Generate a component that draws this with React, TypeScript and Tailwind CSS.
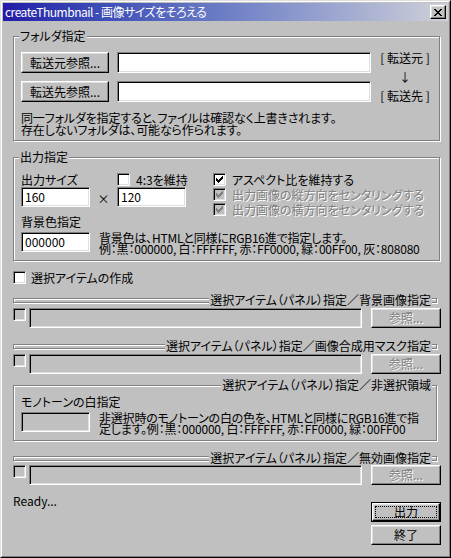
import React from 'react';

const FONT = "font-['Noto_Sans_CJK_JP',sans-serif] [font-feature-settings:'palt']";

type BoxProps = { children?: React.ReactNode; className?: string };

// raised 3D bevel used by buttons
function Raised({ children, className = '' }: BoxProps) {
  return (
    <div
      className={`flex items-center justify-center bg-[#c0c0c0] border border-t-white border-l-white border-r-black border-b-black shadow-[inset_-1px_-1px_0_#808080,inset_1px_1px_0_#dfdfdf] ${className}`}
    >
      {children}
    </div>
  );
}

// sunken bevel used by edit fields and checkboxes
function Sunken({ children, className = '' }: BoxProps) {
  return (
    <div
      className={`border border-t-[#808080] border-l-[#808080] border-r-white border-b-white shadow-[inset_1px_1px_0_#000,inset_-1px_-1px_0_#dfdfdf] ${className}`}
    >
      {children}
    </div>
  );
}

function Btn({
  label,
  disabled,
  primary,
  className = '',
}: {
  label: string;
  disabled?: boolean;
  primary?: boolean;
  className?: string;
}) {
  const text = disabled ? 'text-[#808080] [text-shadow:1px_1px_0_#fff]' : 'text-black';
  if (primary) {
    return (
      <div className={`border border-black ${className}`}>
        <Raised className="h-full w-full p-[2px]">
          <div className="flex h-full w-full items-center justify-center border border-dotted border-black">
            {label}
          </div>
        </Raised>
      </div>
    );
  }
  return <Raised className={`${text} ${className}`}>{label}</Raised>;
}

function Field({ value, disabled, className = '' }: { value?: string; disabled?: boolean; className?: string }) {
  return (
    <Sunken
      className={`flex h-[20px] items-center pl-[3px] leading-[14px] ${disabled ? 'bg-[#c0c0c0]' : 'bg-white'} ${className}`}
    >
      {value}
    </Sunken>
  );
}

function Check({ checked, disabled }: { checked?: boolean; disabled?: boolean }) {
  return (
    <Sunken
      className={`flex h-[13px] w-[13px] shrink-0 items-center justify-center ${disabled ? 'bg-[#c0c0c0]' : 'bg-white'}`}
    >
      {checked && (
        <svg width="7" height="7" viewBox="0 0 7 7" shapeRendering="crispEdges">
          <path
            d="M6 0h1v1h-1zM5 1h2v1h-2zM0 2h1v1h-1zM4 2h3v1h-3zM0 3h2v1h-2zM3 3h3v1h-3zM0 4h5v1h-5zM1 5h3v1h-3zM2 6h1v1h-1z"
            fill={disabled ? '#808080' : '#000'}
          />
        </svg>
      )}
    </Sunken>
  );
}

function CheckRow({ label, checked, disabled }: { label: string; checked?: boolean; disabled?: boolean }) {
  return (
    <div className="flex h-[13px] items-center gap-[6px]">
      <Check checked={checked} disabled={disabled} />
      <span className={`leading-[13px] ${disabled ? 'text-[#808080] [text-shadow:1px_1px_0_#fff]' : ''}`}>{label}</span>
    </div>
  );
}

function Group({
  caption,
  right,
  thin,
  className = '',
  children,
}: {
  caption: string;
  right?: boolean;
  thin?: boolean;
  className?: string;
  children?: React.ReactNode;
}) {
  return (
    <div className={`relative border border-[#808080] shadow-[inset_1px_1px_0_#fff,1px_1px_0_#fff] ${className}`}>
      <span
        className={`absolute whitespace-nowrap bg-[#c0c0c0] px-px leading-[14px] ${thin ? '-top-[6px]' : '-top-[8px]'} ${right ? 'right-[4px]' : 'left-[5px]'}`}
      >
        {caption}
      </span>
      {children}
    </div>
  );
}

function FileRow({ className = '' }: { className?: string }) {
  return (
    <div className={`flex h-[20px] items-start ${className}`}>
      <Check disabled />
      <Field disabled className="ml-[3px] w-[333px]" />
      <Btn label="参照..." disabled className="ml-[9px] h-[20px] w-[70px]" />
    </div>
  );
}

export default function App() {
  return (
    <div
      className={`h-[558px] w-[451px] border border-t-[#dfdfdf] border-l-[#dfdfdf] border-r-black border-b-black bg-[#c0c0c0] text-[12px] leading-[14px] text-black ${FONT}`}
    >
      <div className="flex h-full flex-col border border-t-white border-l-white border-r-[#808080] border-b-[#808080] p-px">
        {/* title bar */}
        <div className="flex h-[18px] shrink-0 items-center justify-between bg-linear-to-r from-[#2418a8] to-[#d0d0d8] pl-[2px] pr-[2px]">
          <span className="whitespace-nowrap tracking-[-0.5px] text-white">createThumbnail - 画像サイズをそろえる</span>
          <Raised className="h-[14px] w-[16px]">
            <svg width="8" height="7" viewBox="0 0 8 7" shapeRendering="crispEdges">
              <path d="M0 0h2v1h-2zM6 0h2v1h-2zM1 1h2v1h-2zM5 1h2v1h-2zM2 2h4v1h-4zM3 3h2v1h-2zM2 4h4v1h-4zM1 5h2v1h-2zM5 5h2v1h-2zM0 6h2v1h-2zM6 6h2v1h-2z" fill="#000" />
            </svg>
          </Raised>
        </div>

        <div className="flex flex-col pl-[10px]">
          {/* フォルダ指定 */}
          <Group caption="フォルダ指定" className="mt-[15px] h-[105px] w-[427px] pl-[7px] pt-[15px]">
            <div className="flex">
              <div className="flex flex-col gap-[8px]">
                <div className="flex">
                  <Btn label="転送元参照..." className="h-[21px] w-[88px]" />
                  <Field className="ml-[8px] h-[21px] w-[254px]" />
                </div>
                <div className="flex">
                  <Btn label="転送先参照..." className="h-[21px] w-[88px]" />
                  <Field className="ml-[8px] h-[21px] w-[254px]" />
                </div>
              </div>
              <div className="flex h-[50px] flex-1 flex-col items-center justify-between leading-[12px]">
                <span className="whitespace-pre">[ 転送元 ]</span>
                <span>↓</span>
                <span className="whitespace-pre">[ 転送先 ]</span>
              </div>
            </div>
            <p className="mt-[10px] leading-[12px] tracking-[-0.15px]">
              同一フォルダを指定すると、ファイルは確認なく上書きされます。
              <br />
              存在しないフォルダは、可能なら作られます。
            </p>
          </Group>

          {/* 出力指定 */}
          <Group caption="出力指定" className="mt-[16px] h-[104px] w-[427px] pl-[7px] pt-[15px]">
            <div className="flex">
              <div className="w-[192px]">
                <div className="flex h-[13px] items-center">
                  <span className="w-[96px] leading-[13px]">出力サイズ</span>
                  <Check />
                  <span className="ml-[6px] leading-[13px]">4:3を維持</span>
                </div>
                <div className="mt-px flex items-center">
                  <Field value="160" className="w-[69px]" />
                  <span className="w-[27px] pt-[3px] text-center">×</span>
                  <Field value="120" className="w-[69px]" />
                </div>
                <div className="mt-[8px]">背景色指定</div>
              </div>
              <div className="flex flex-col gap-[2px]">
                <CheckRow label="アスペクト比を維持する" checked />
                <CheckRow label="出力画像の縦方向をセンタリングする" checked disabled />
                <CheckRow label="出力画像の横方向をセンタリングする" checked disabled />
              </div>
            </div>
            <div className="mt-[3px] flex">
              <Field value="000000" className="w-[69px]" />
              <p className="ml-[9px] whitespace-nowrap leading-[11px] tracking-[-0.2px]">
                背景色は、HTMLと同様にRGB16進で指定します。
                <br />
                例：黒：000000, 白：FFFFFF, 赤：FF0000, 緑：00FF00, 灰：808080
              </p>
            </div>
          </Group>

          <div className="mt-[10px] flex h-[13px] items-center gap-[5px]">
            <Check />
            <span className="leading-[13px]">選択アイテムの作成</span>
          </div>

          <Group caption="選択アイテム（パネル）指定／背景画像指定" right thin className="mt-[14px] h-[5px] w-[424px]" />
          <FileRow className="mt-[5px]" />

          <Group caption="選択アイテム（パネル）指定／画像合成用マスク指定" right thin className="mt-[16px] h-[5px] w-[424px]" />
          <FileRow className="mt-[5px]" />

          <Group caption="選択アイテム（パネル）指定／非選択領域" right className="mt-[11px] h-[56px] w-[424px] pl-[7px] pt-[9px]">
            <div>モノトーンの白指定</div>
            <div className="mt-[3px] flex">
              <Field disabled className="w-[69px]" />
              <p className="ml-[9px] whitespace-nowrap leading-[11px] tracking-[-0.2px]">
                非選択時のモノトーンの白の色を、HTMLと同様にRGB16進で指
                <br />
                定します。例：黒：000000, 白：FFFFFF, 赤：FF0000, 緑：00FF00
              </p>
            </div>
          </Group>

          <Group caption="選択アイテム（パネル）指定／無効画像指定" right thin className="mt-[15px] h-[5px] w-[424px]" />
          <FileRow className="mt-[4px]" />

          <div className="mt-[9px] flex w-[428px] justify-between">
            <span>Ready...</span>
            <div className="mt-[8px] flex flex-col gap-[3px]">
              <Btn primary label="出力" className="h-[20px] w-[70px]" />
              <Btn label="終了" className="h-[20px] w-[70px]" />
            </div>
          </div>
        </div>
      </div>
    </div>
  );
}
